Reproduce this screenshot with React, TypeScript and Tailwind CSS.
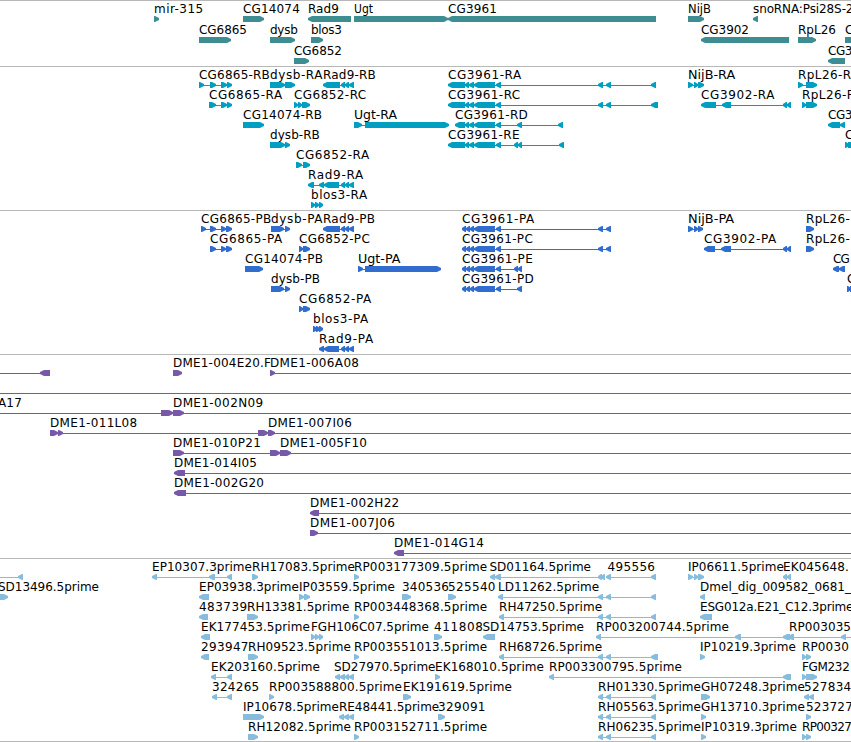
type Block = [number, number];

// row, label, label start, label end, strand, exons
type Feature = [number, string, number, number, "+" | "-", Block[]];

const genes: Feature[] = [
    [0, "mir-315", 154, 202.7, "+", [[154, 159]]],
    [0, "CG14074", 243, 299.3, "+", [[243, 264]]],
    [0, "Rad9", 308, 338.3, "-", [[308, 351]]],
    [0, "Ugt", 354, 372.5, "+", [[354, 448]]],
    [0, "CG3961", 448, 496.3, "-", [[448, 656]]],
    [0, "NijB", 688, 710.5, "+", [[688, 704]]],
    [0, "snoRNA:Psi28S-2", 753, 853, "-", [[753, 758]]],
    [1, "CG6865", 199, 246.5, "+", [[199, 231]]],
    [1, "dysb", 270, 297.3, "+", [[270, 295]]],
    [1, "blos3", 311, 341.3, "+", [[311, 323]]],
    [1, "CG3902", 701, 748.5, "-", [[701, 789]]],
    [1, "RpL26", 798, 835.5, "+", [[798, 816]]],
    [1, "CG", 845, 861, "+", [[845, 870]]],
    [2, "CG6852", 294, 341.5, "+", [[294, 309]]],
    [2, "CG3", 828, 852, "-", [[828, 845]]],
];

const transcripts: Feature[] = [
    [0, "CG6865-RB", 199, 269.3, "+", [[199, 204], [210, 216], [221, 227], [227, 232]]],
    [0, "dysb-RA", 270, 322, "+", [[270, 285], [285, 295]]],
    [0, "Rad9-RB", 323, 375.3, "-", [[323, 340], [341, 345], [345, 349], [349, 354]]],
    [0, "CG3961-RA", 448, 520.7, "-", [[448, 465], [465, 469], [469, 474], [474, 495], [496, 501], [598, 603], [606, 611], [651, 656]]],
    [0, "NijB-RA", 688, 734.7, "+", [[688, 693], [694, 698], [698, 704]]],
    [0, "RpL26-R", 798, 850.7, "+", [[798, 803], [806, 817]]],
    [1, "CG6865-RA", 209, 281.7, "+", [[209, 216], [221, 227], [227, 232]]],
    [1, "CG6852-RC", 294, 365.7, "+", [[294, 298], [298, 302], [302, 310]]],
    [1, "CG3961-RC", 448, 519.7, "-", [[448, 465], [465, 469], [469, 474], [474, 495], [496, 501], [598, 603], [606, 611], [651, 658]]],
    [1, "CG3902-RA", 701, 774, "-", [[701, 716], [722, 731], [783, 787], [787, 791]]],
    [1, "RpL26-R", 802, 854.7, "+", [[802, 806], [806, 817]]],
    [2, "CG14074-RB", 243, 321.5, "+", [[243, 264]]],
    [2, "Ugt-RA", 354, 396.5, "+", [[354, 362], [365, 449]]],
    [2, "CG3961-RD", 455, 527.3, "-", [[455, 465], [465, 469], [469, 474], [474, 495], [496, 501], [517, 522], [558, 563]]],
    [2, "CG3", 828, 852, "-", [[828, 840], [840, 845]]],
    [3, "dysb-RB", 270, 319.3, "+", [[270, 285], [285, 290]]],
    [3, "CG3961-RE", 448, 519, "-", [[448, 465], [465, 469], [469, 474], [474, 495], [496, 501], [514, 518], [518, 522], [559, 564]]],
    [3, "CG", 845, 861, "+", [[845, 849], [848, 858]]],
    [4, "CG6852-RA", 296, 368.7, "+", [[296, 302], [303, 310]]],
    [5, "Rad9-RA", 308, 362.7, "-", [[308, 314], [319, 324], [324, 339], [341, 345], [345, 349], [349, 354]]],
    [6, "blos3-RA", 311, 366.7, "+", [[311, 315], [315, 319], [319, 323]]],
];

const proteins: Feature[] = [
    [0, "CG6865-PB", 201, 270.7, "+", [[201, 206], [210, 216], [221, 226], [226, 232]]],
    [0, "dysb-PA", 271, 322, "+", [[271, 284], [285, 290]]],
    [0, "Rad9-PB", 323, 374.5, "-", [[323, 340], [341, 345], [345, 349], [349, 354]]],
    [0, "CG3961-PA", 462, 533.7, "-", [[462, 466], [466, 470], [470, 474], [474, 495], [496, 501], [598, 603], [606, 611]]],
    [0, "NijB-PA", 688, 733.7, "+", [[688, 693], [694, 698], [698, 703]]],
    [0, "RpL26-", 806, 849.3, "+", [[806, 814]]],
    [1, "CG6865-PA", 210, 281.7, "+", [[210, 216], [221, 226], [226, 232]]],
    [1, "CG6852-PC", 299, 369.3, "+", [[299, 303], [303, 310]]],
    [1, "CG3961-PC", 462, 532.3, "-", [[462, 466], [466, 470], [470, 474], [474, 495], [496, 501], [598, 603], [606, 611]]],
    [1, "CG3902-PA", 704, 775.7, "-", [[704, 715], [721, 731], [783, 787], [787, 791]]],
    [1, "RpL26-", 806, 849.3, "+", [[806, 814]]],
    [2, "CG14074-PB", 245, 322.5, "+", [[245, 263]]],
    [2, "Ugt-PA", 358, 400, "+", [[358, 363], [365, 441]]],
    [2, "CG3961-PE", 462, 532.3, "-", [[462, 466], [466, 470], [470, 474], [474, 495], [496, 501], [514, 518], [518, 522]]],
    [2, "CG", 833, 849.3, "-", [[833, 839], [839, 845]]],
    [3, "dysb-PB", 271, 319.5, "+", [[271, 284], [285, 290]]],
    [3, "CG3961-PD", 462, 533.3, "-", [[462, 466], [466, 470], [470, 474], [474, 495], [496, 501], [517, 522]]],
    [3, "C", 847, 855, "+", [[847, 851], [850, 858]]],
    [4, "CG6852-PA", 299, 370.7, "+", [[299, 303], [303, 310]]],
    [5, "blos3-PA", 313, 367.7, "+", [[313, 317], [316, 320], [319, 323]]],
    [6, "Rad9-PA", 319, 372.7, "-", [[319, 324], [324, 339], [341, 345], [345, 349], [349, 354]]],
];

const clones: Feature[] = [
    [0, "", 0, 0, "-", [[-20, -10], [40, 50]]],
    [0, "DME1-004E20.F", 173, 270.5, "+", [[173, 182]]],
    [0, "DME1-006A08", 270, 358.5, "+", [[270, 275], [860, 870]]],
    [1, "", 0, 0, "+", [[-20, -10], [860, 870]]],
    [2, "A17", -2, 21.3, "+", [[-20, -10], [161, 173]]],
    [2, "DME1-002N09", 173, 262.7, "+", [[173, 184], [860, 870]]],
    [3, "DME1-011L08", 50, 136.7, "+", [[50, 58], [58, 63], [258, 268]]],
    [3, "DME1-007I06", 268, 351.3, "+", [[268, 275], [860, 870]]],
    [4, "DME1-010P21", 173, 260.3, "+", [[173, 184], [270, 280]]],
    [4, "DME1-005F10", 280, 366.5, "+", [[280, 291], [860, 870]]],
    [5, "DME1-014I05", 174, 256.5, "-", [[174, 185], [860, 870]]],
    [6, "DME1-002G20", 174, 263.5, "-", [[174, 186], [860, 870]]],
    [7, "DME1-002H22", 310, 398.7, "-", [[310, 319], [860, 870]]],
    [8, "DME1-007J06", 310, 394.5, "+", [[310, 318], [860, 870]]],
    [9, "DME1-014G14", 394, 483.3, "-", [[394, 404], [860, 870]]],
];

const ests: Feature[] = [
    [0, "", 0, 0, "-", [[-20, -10], [18, 23]]],
    [0, "EP10307.3prime", 152, 251.5, "-", [[152, 157], [209, 215], [227, 232]]],
    [0, "RH17083.5prime", 252, 354.5, "+", [[252, 258]]],
    [0, "RP003177309.5prime", 354, 486.7, "+", [[354, 359]]],
    [0, "SD01164.5prime", 489.5, 590.5, "-", [[490, 495], [495, 501], [598, 602], [601, 605]]],
    [0, "495556", 607.5, 654.5, "-", [[606, 611], [651, 656]]],
    [0, "IP06611.5prime", 688, 783.3, "+", [[688, 693], [694, 698], [698, 704]]],
    [0, "EK045648.", 783, 848.3, "-", [[783, 787], [787, 791]]],
    [1, "SD13496.5prime", -2, 98.5, "+", [[-5, 8]]],
    [1, "EP03938.3prime", 199, 298.5, "-", [[199, 209]]],
    [1, "IP03559.5prime", 299, 394.5, "+", [[299, 304], [304, 310]]],
    [1, "340536", 402, 448.5, "+", [[402, 411]]],
    [1, "525540", 448, 495, "+", [[448, 456]]],
    [1, "LD11262.5prime", 498, 598.7, "-", [[498, 503], [598, 603], [606, 611], [651, 656]]],
    [1, "Dmel_dig_009582_0681_", 700, 850.5, "-", [[700, 705]]],
    [2, "483739", 199, 246.7, "-", [[199, 208]]],
    [2, "RH13381.5prime", 247, 349, "+", [[247, 258]]],
    [2, "RP003448368.5prime", 354, 486.7, "+", [[354, 359]]],
    [2, "RH47250.5prime", 499, 601.7, "-", [[499, 504], [598, 603], [606, 611], [651, 656]]],
    [2, "ESG012a.E21_C12.3prime", 700, 853, "-", [[700, 712]]],
    [3, "EK177453.5prime", 201, 309.3, "-", [[201, 210]]],
    [3, "FGH106C07.5prime", 311, 428.3, "+", [[311, 315], [315, 319], [319, 323]]],
    [3, "411808", 434, 482.3, "+", [[434, 442]]],
    [3, "SD14753.5prime", 482.5, 583.5, "-", [[483, 495]]],
    [3, "RP003200744.5prime", 596, 728.5, "-", [[596, 601], [735, 741], [783, 790]]],
    [3, "RP003035", 789, 850.5, "-", [[788, 794], [841, 846], [860, 870]]],
    [4, "293947", 201, 248, "-", [[201, 209]]],
    [4, "RH09523.5prime", 248, 350.3, "+", [[248, 258]]],
    [4, "RP003551013.5prime", 354, 486.7, "+", [[354, 359]]],
    [4, "RH68726.5prime", 499, 601.7, "-", [[499, 504], [598, 603], [606, 611], [651, 658]]],
    [4, "IP10219.3prime", 700, 795.3, "+", [[700, 705]]],
    [4, "RP0030", 802, 848.3, "+", [[802, 806], [806, 811]]],
    [5, "EK203160.5prime", 211, 319.5, "-", [[211, 216], [227, 232]]],
    [5, "SD27970.5prime", 334, 435, "-", [[335, 340], [340, 345], [345, 349], [349, 354]]],
    [5, "EK168010.5prime", 435, 543.5, "+", [[435, 440]]],
    [5, "RP003300795.5prime", 549, 681.5, "-", [[549, 554], [783, 791]]],
    [5, "FGM232", 802, 849.3, "+", [[802, 806], [806, 817]]],
    [6, "324265", 212, 258.7, "-", [[212, 217], [227, 232]]],
    [6, "RP003588800.5prime", 269, 401.5, "+", [[269, 274]]],
    [6, "EK191619.5prime", 403, 511.3, "+", [[403, 411]]],
    [6, "RH01330.5prime", 598, 700.5, "-", [[598, 603], [606, 611], [651, 656]]],
    [6, "GH07248.3prime", 701, 804.3, "+", [[701, 710]]],
    [6, "527834", 804, 850.7, "-", [[804, 809], [809, 814]]],
    [7, "IP10678.5prime", 243, 338.5, "+", [[243, 264]]],
    [7, "RE48441.5prime", 339, 438.7, "-", [[339, 344], [344, 349], [349, 354]]],
    [7, "329091", 438, 485, "+", [[438, 445]]],
    [7, "RH05563.5prime", 598, 700.5, "-", [[598, 603], [606, 611], [651, 656]]],
    [7, "GH13710.3prime", 701, 804.3, "+", [[701, 706]]],
    [7, "523727", 806, 852.3, "+", [[806, 811]]],
    [8, "RH12082.5prime", 248, 350.5, "+", [[248, 258]]],
    [8, "RP003152711.5prime", 354, 486.7, "+", [[354, 359]]],
    [8, "RH06235.5prime", 598, 700.5, "-", [[598, 603], [606, 611], [651, 656]]],
    [8, "IP10319.3prime", 701, 796.5, "+", [[701, 706]]],
    [8, "RP00327", 802, 851.5, "+", [[802, 806], [806, 811]]],
];

function blockPath([a, b]: Block, strand: "+" | "-", y: number) {
    const head = Math.min(5, b - a);
    if (strand === "+") {
        return `M${a} ${y}H${b - head + 1}L${b} ${y + 2}V${y + 4}L${b - head + 1} ${y + 6}H${a}Z`;
    }
    return `M${b} ${y}H${a + head - 1}L${a} ${y + 2}V${y + 4}L${a + head - 1} ${y + 6}H${b}Z`;
}

function Track({ features, rowHeight = 20, className }: { features: Feature[]; rowHeight?: number; className: string }) {
    return (
        <section className={`border-t border-[#b8b8b8] overflow-hidden ${className}`}>
            <svg width="851" height="100%" className="block">
                {features.map(([row, label, x, end, strand, blocks], i) => {
                    const top = row * rowHeight;
                    const from = blocks[0][0];
                    const to = blocks[blocks.length - 1][1];
                    return (
                        <g key={i}>
                            {blocks.length > 1 && <rect x={from} y={top + 18} width={to - from} height="1" fill="currentColor" />}
                            <path d={blocks.map((b) => blockPath(b, strand, top + 15)).join("")} fill="currentColor" />
                            {label && (
                                <text
                                    x={x}
                                    y={top + 12}
                                    textLength={end - x + 0.5}
                                    lengthAdjust={label.startsWith("Ugt") || label.startsWith("NijB") ? "spacingAndGlyphs" : "spacing"}
                                    className="fill-black text-[12px]"
                                >
                                    {label}
                                </text>
                            )}
                        </g>
                    );
                })}
            </svg>
        </section>
    );
}

export default function App() {
    return (
        <main className="flex flex-col w-[851px] h-[742px] overflow-hidden bg-white border-b border-[#b8b8b8] font-['DejaVu_Sans',sans-serif]">
            <Track features={genes} rowHeight={21} className="h-[66px] text-[#3e8d93]" />
            <Track features={transcripts} className="h-[144px] text-[#009fc1]" />
            <Track features={proteins} className="h-[144px] text-[#316dce]" />
            <Track features={clones} className="h-[204px] text-[#7759a8]" />
            <Track features={ests} className="h-[183px] text-[#88bcdd]" />
        </main>
    );
}
